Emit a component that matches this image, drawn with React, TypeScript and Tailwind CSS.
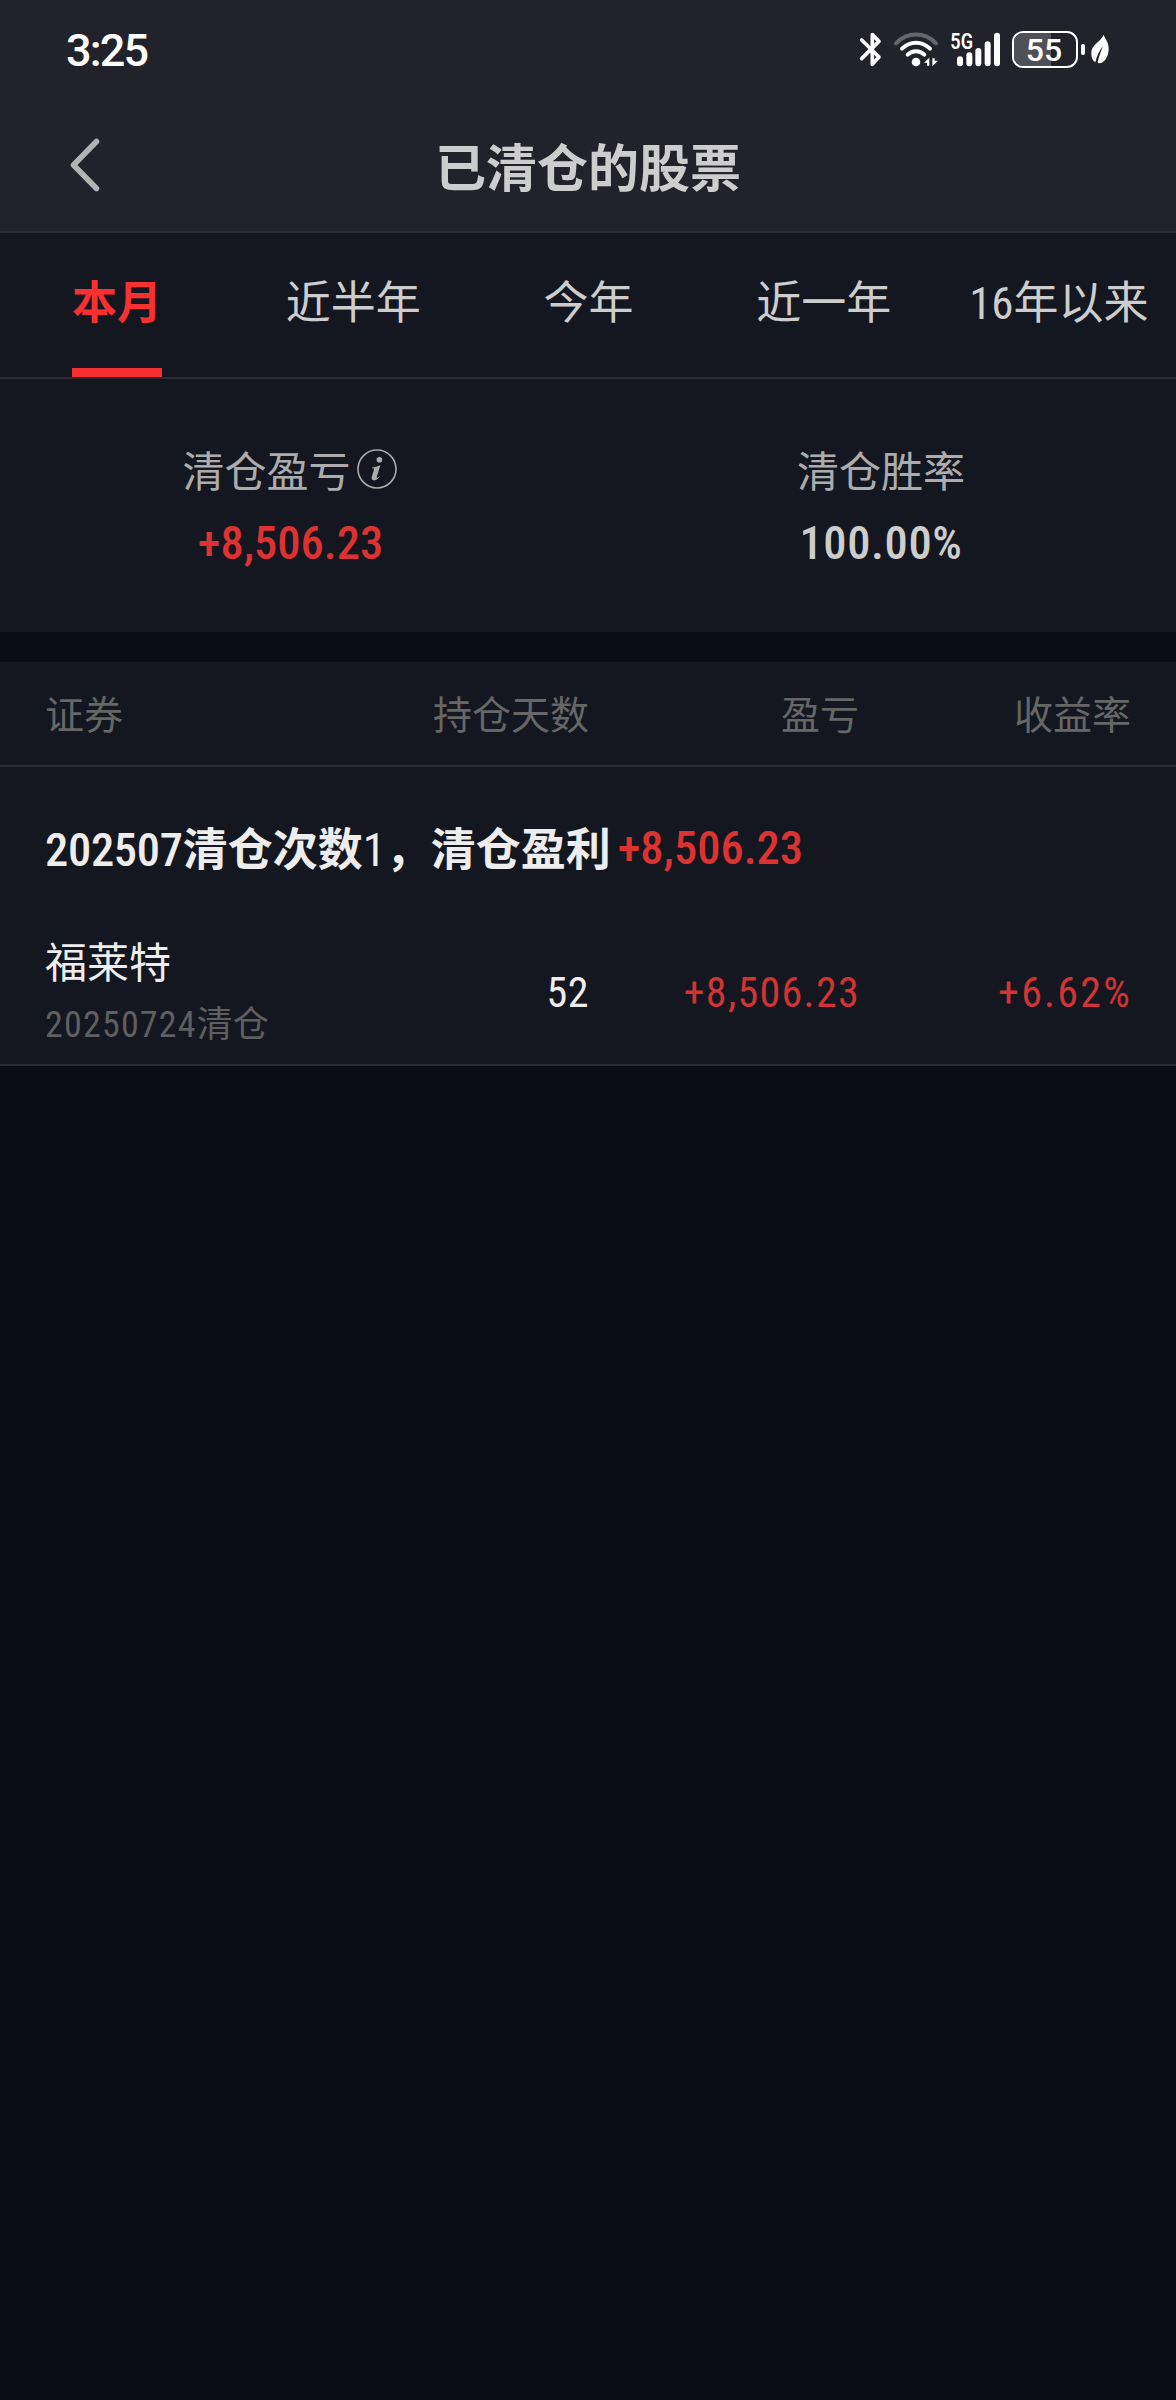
import type { ReactNode } from "react";
import clsx from "clsx";

type Tab = { id: string; label: ReactNode };

type Holding = {
  name: string;
  closedOn: string;
  days: number;
  profit: string;
  rate: string;
};

const tabs: Tab[] = [
  { id: "month", label: "本月" },
  { id: "half-year", label: "近半年" },
  { id: "this-year", label: "今年" },
  { id: "one-year", label: "近一年" },
  { id: "all", label: <><Num>16</Num>年以来</> },
];

const holdings: Holding[] = [
  {
    name: "福莱特",
    closedOn: "20250724",
    days: 52,
    profit: "+8,506.23",
    rate: "+6.62%",
  },
];

export default function App() {
  return (
    <main className="flex h-[2400px] w-[1176px] flex-col overflow-hidden bg-[#0b0b14] font-['Noto_Sans_CJK_SC',sans-serif] text-[#ededed]">
      <header className="border-b-2 border-[#2a2b33] bg-[#22222a]">
        <StatusBar />
        <NavBar title="已清仓的股票" />
      </header>
      <TabBar activeId="month" />
      <Summary />
      <HoldingsTable />
    </main>
  );
}

function StatusBar() {
  return (
    <div className="flex h-[99px] items-center justify-between px-[66px] text-white">
      <span className="pt-[2px] font-['Roboto',sans-serif] text-[45px] leading-none font-medium tracking-[-1.8px]">
        3:25
      </span>
      <div className="flex items-center">
        <BluetoothIcon />
        <WifiIcon />
        <SignalIcon />
        <Battery level={55} />
        <LeafIcon />
      </div>
    </div>
  );
}

function NavBar({ title }: { title: string }) {
  return (
    <div className="grid h-[132px] grid-cols-[1fr_auto_1fr] items-center">
      <button type="button" aria-label="返回" className="pl-[68px]">
        <svg width="34" height="56" viewBox="0 0 34 56" fill="none">
          <path
            d="M28.5 4.5 5.5 28 28.5 51.5"
            stroke="#b3b3b3"
            strokeWidth="5.6"
            strokeLinecap="round"
            strokeLinejoin="round"
          />
        </svg>
      </button>
      <h1 className="text-[51px] leading-none font-bold text-[#cdcdcd]">{title}</h1>
    </div>
  );
}

function TabBar({ activeId }: { activeId: string }) {
  return (
    <nav className="grid h-[146px] grid-cols-5 border-b-2 border-[#2a2b33] bg-[#14171f]">
      {tabs.map((tab) => {
        const active = tab.id === activeId;

        return (
          <button
            key={tab.id}
            type="button"
            className={clsx(
              "flex flex-col items-center justify-between pt-[44px] text-[45px] leading-none whitespace-nowrap",
              active ? "pr-[1px] font-bold text-[#f73131]" : "pl-[1px] text-[#cdcdcd]",
            )}
          >
            <span>{tab.label}</span>
            {active && <span className="h-[9px] w-[90px] bg-[#f73131]" />}
          </button>
        );
      })}
    </nav>
  );
}

function Summary() {
  return (
    <section className="mb-[30px] grid h-[253px] grid-cols-2 bg-[#14171f] pt-[69px] text-center text-[42px] leading-none">
      <div className="flex flex-col items-center pr-[9px]">
        <div className="flex items-center gap-[6px] text-[#acacac]">
          清仓盈亏
          <InfoIcon />
        </div>
        <Num className="mt-[30px] pl-[2px] text-[46.5px] leading-none font-medium text-[#dc3232]">
          +8,506.23
        </Num>
      </div>
      <div className="flex flex-col items-center pr-[2px]">
        <div className="text-[#acacac]">清仓胜率</div>
        <Num className="mt-[30px] text-[46.5px] leading-none font-medium tracking-[0.6px] text-[#cdcdcd]">
          100.00%
        </Num>
      </div>
    </section>
  );
}

function HoldingsTable() {
  return (
    <section className="border-b-2 border-[#2a2b33] bg-[#14171f]">
      <div className="grid h-[105px] grid-cols-[300px_244px_270px_272px] items-center border-b-2 border-[#2a2b33] px-[45px] pb-[2px] text-[39px] leading-none text-[#666666]">
        <span>证券</span>
        <span className="text-right">持仓天数</span>
        <span className="text-right">盈亏</span>
        <span className="text-right">收益率</span>
      </div>
      <p className="flex h-[160px] items-center px-[45px] pt-[3px] text-[45px] leading-none font-bold whitespace-nowrap">
        <span>
          <Num className="text-[46.5px] font-medium tracking-[-0.3px]">202507</Num>清仓次数
          <Num className="text-[46.5px] font-normal">1</Num>，清仓盈利
        </span>
        <Num className="ml-[7px] text-[46.5px] font-medium text-[#dc3232]">+8,506.23</Num>
      </p>
      {holdings.map((holding) => (
        <div
          key={holding.name}
          className="grid h-[137px] grid-cols-[300px_244px_270px_272px] items-center px-[45px] pb-[6px] text-right text-[42px] leading-none"
        >
          <div className="-mt-[4px] text-left">
            <div>{holding.name}</div>
            <div className="mt-[22px] text-[36px] leading-none text-[#5f5f5f]">
              <Num className="tracking-[1.2px]">{holding.closedOn}</Num>清仓
            </div>
          </div>
          <Num className="tracking-[0.5px]">{holding.days}</Num>
          <Num className="-mr-[1px] tracking-[1.3px] text-[#d23333]">{holding.profit}</Num>
          <Num className="-mr-[1px] tracking-[2.2px] text-[#d23333]">{holding.rate}</Num>
        </div>
      ))}
    </section>
  );
}

/* Latin digits are set narrower than the Chinese text around them */
function Num({ children, className }: { children: ReactNode; className?: string }) {
  return (
    <span className={clsx("font-['Roboto',sans-serif] [font-stretch:85%]", className)}>
      {children}
    </span>
  );
}

function InfoIcon() {
  return (
    <svg width="40" height="40" viewBox="0 0 40 40" fill="none">
      <circle cx="20" cy="20" r="19" stroke="currentColor" strokeWidth="1.6" />
      <circle cx="22.4" cy="10.8" r="2.8" fill="currentColor" />
      <path
        d="M15 18.4c3-.3 5.6-1 8.4-2.200l-3.600 11.600c-.4 1.500.6 1.700 3.400-1.200-2 3.700-4.200 5-6.200 4.800-2.300-.2-2.700-1.900-2.100-4l2-6.600c.3-1.200-.3-1.800-1.900-1.600z"
        fill="currentColor"
      />
    </svg>
  );
}

function BluetoothIcon() {
  return (
    <svg width="24" height="37" viewBox="58 33 72 111" fill="none">
      <path
        d="M66 60 118 111 98 133V44L118 64 66 116"
        stroke="currentColor"
        strokeWidth="11"
        strokeLinecap="round"
        strokeLinejoin="round"
      />
    </svg>
  );
}

function WifiIcon() {
  return (
    <svg className="ml-[10px]" width="46" height="37" viewBox="159 33 138 111" fill="none">
      <g stroke="currentColor" strokeWidth="12" strokeLinecap="round">
        <path d="M168 70C202 35 254 35 288 70" stroke="#66666c" />
        <path d="M186 86C210 62 246 62 270 86" />
        <path d="M203 104C217 90 239 90 253 104" />
      </g>
      <circle cx="228" cy="126" r="13" fill="currentColor" />
      <path d="M252 128 268 113V137H261V128ZM294 122 277 139V115H284V122Z" fill="currentColor" />
    </svg>
  );
}

function SignalIcon() {
  return (
    <svg className="ml-[10px] overflow-visible" width="52" height="37" viewBox="327 33 156 111">
      <text
        x="331"
        y="86"
        fontFamily="Roboto, sans-serif"
        fontSize="64"
        fontWeight="600"
        textLength="68"
        lengthAdjust="spacingAndGlyphs"
        fill="currentColor"
      >
        5G
      </text>
      <g stroke="currentColor" strokeWidth="18" strokeLinecap="round">
        <path d="M360 118V130M388 106V130M415 93V130M443 73V130M471 47V130" />
      </g>
    </svg>
  );
}

function Battery({ level }: { level: number }) {
  return (
    <div className="ml-[11px] flex items-center gap-[3px]">
      <div className="relative flex h-[37px] w-[66px] items-center justify-center overflow-hidden rounded-[11px] border-2 border-white">
        <div className="absolute inset-y-0 left-0 bg-[#505057]" style={{ width: `${level + 5}%` }} />
        <span className="relative pr-[2px] font-['Roboto',sans-serif] text-[32px] leading-none font-medium [font-stretch:90%]">
          {level}
        </span>
      </div>
      <span className="h-[11px] w-[4px] rounded-full bg-white" />
    </div>
  );
}

function LeafIcon() {
  return (
    <svg className="ml-[5px]" width="20" height="37" viewBox="750 33 60 111">
      <path
        d="M791 44C796 58 806 66 806 86 806 108 796 126 779 130 774 130 772 128 774 122 778 106 784 92 789 78 778 92 770 108 766 127 757 121 753 110 754 98 755 72 782 66 791 44Z"
        fill="currentColor"
      />
    </svg>
  );
}
